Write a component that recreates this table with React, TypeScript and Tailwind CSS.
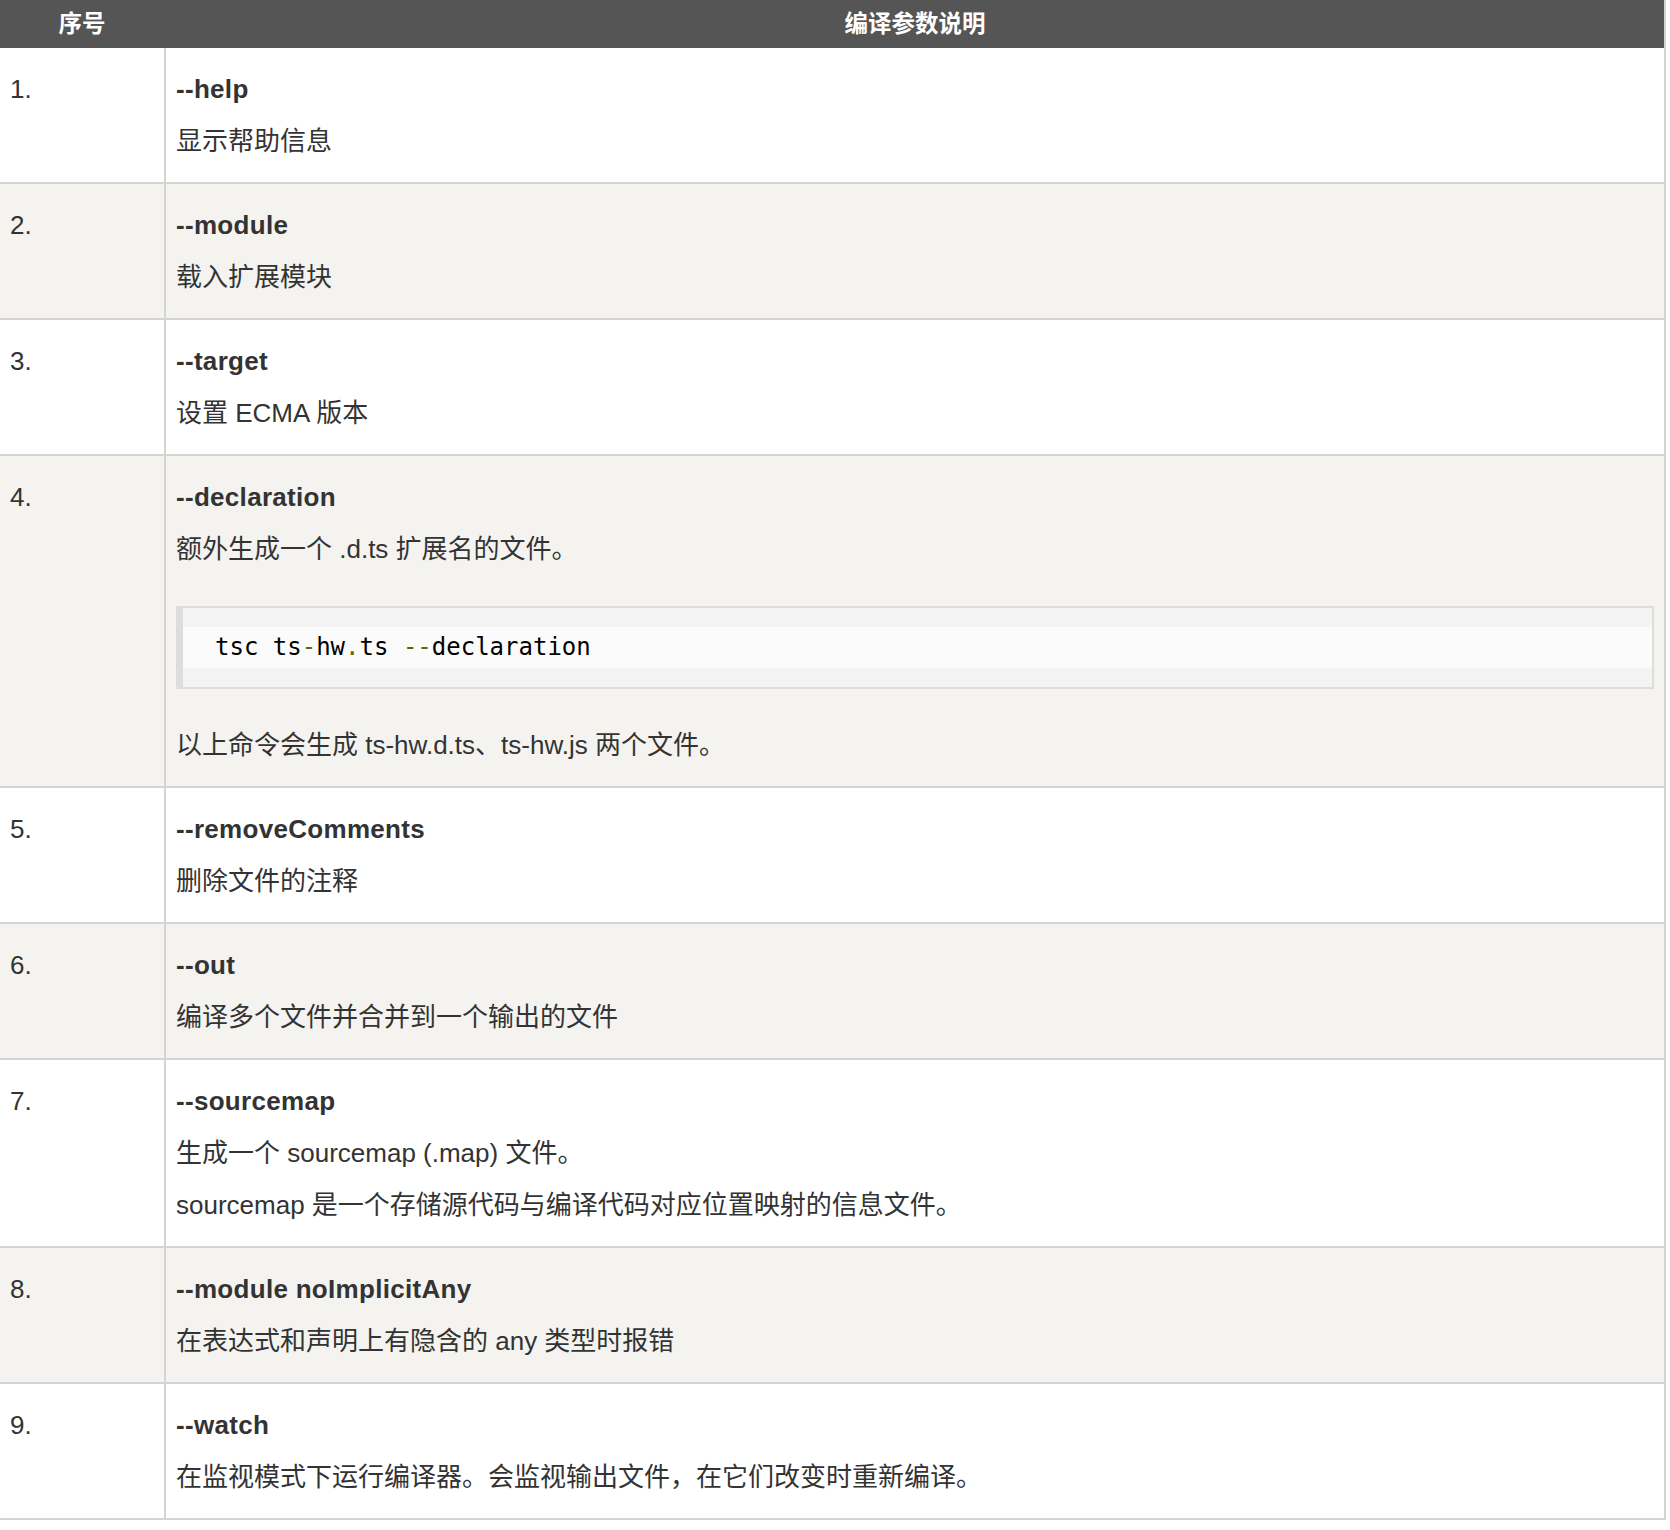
import React from "react";

type Row = { n: string; title: string; lines: string[]; code?: boolean };

const rows: Row[] = [
  { n: "1.", title: "--help", lines: ["显示帮助信息"] },
  { n: "2.", title: "--module", lines: ["载入扩展模块"] },
  { n: "3.", title: "--target", lines: ["设置 ECMA 版本"] },
  { n: "4.", title: "--declaration", lines: ["额外生成一个 .d.ts 扩展名的文件。"], code: true },
  { n: "5.", title: "--removeComments", lines: ["删除文件的注释"] },
  { n: "6.", title: "--out", lines: ["编译多个文件并合并到一个输出的文件"] },
  {
    n: "7.",
    title: "--sourcemap",
    lines: ["生成一个 sourcemap (.map) 文件。", "sourcemap 是一个存储源代码与编译代码对应位置映射的信息文件。"],
  },
  { n: "8.", title: "--module noImplicitAny", lines: ["在表达式和声明上有隐含的 any 类型时报错"] },
  { n: "9.", title: "--watch", lines: ["在监视模式下运行编译器。会监视输出文件，在它们改变时重新编译。"] },
];

const sans = "font-['Liberation_Sans','Noto_Sans_CJK_SC',sans-serif]";

export default function App() {
  return (
    <div className={`w-[1670px] bg-white ${sans} text-[#333]`}>
      <div className="w-[1666px] border-r-2 border-[#d4d4d4]">
        <div className="flex h-[48px] bg-[#555555] text-white font-bold text-[23.5px] leading-[48px]">
          <div className="w-[164px] text-center">序号</div>
          <div className="flex-1 text-center pl-[2px]">编译参数说明</div>
        </div>
        {rows.map((r, i) => (
          <div
            key={r.n}
            className={`flex border-b-2 border-[#d4d4d4] ${i % 2 === 1 ? "bg-[#f4f3f0]" : "bg-white"}`}
          >
            <div className="w-[166px] shrink-0 border-r-2 border-[#d4d4d4] pl-[10px] pt-[20.5px] text-[26px] leading-[40px]">
              {r.n}
            </div>
            <div className="flex-1 px-[10px] pt-[20.5px] pb-[21.5px] flex flex-col gap-[12px] text-[26px] leading-[40px]">
              <div className="font-bold tracking-[0.3px]">{r.title}</div>
              {r.lines.map((l) => (
                <div key={l}>{l}</div>
              ))}
              {r.code && (
                <>
                  <div className="mt-[25px] mb-[24px] border-2 border-l-[7px] border-[#dddddd] bg-[#f3f3f3] py-[19px]">
                    <div className="bg-[#fbfbfb] h-[41px] leading-[41px] pl-[32px] font-['DejaVu_Sans_Mono',monospace] text-[24px] text-black whitespace-pre">
                      tsc ts<span className="text-[#666600]">-</span>hw<span className="text-[#666600]">.</span>ts{" "}
                      <span className="text-[#666600]">--</span>declaration
                    </div>
                  </div>
                  <div>以上命令会生成 ts-hw.d.ts、ts-hw.js 两个文件。</div>
                </>
              )}
            </div>
          </div>
        ))}
      </div>
      <div className="h-[12px]" />
    </div>
  );
}
